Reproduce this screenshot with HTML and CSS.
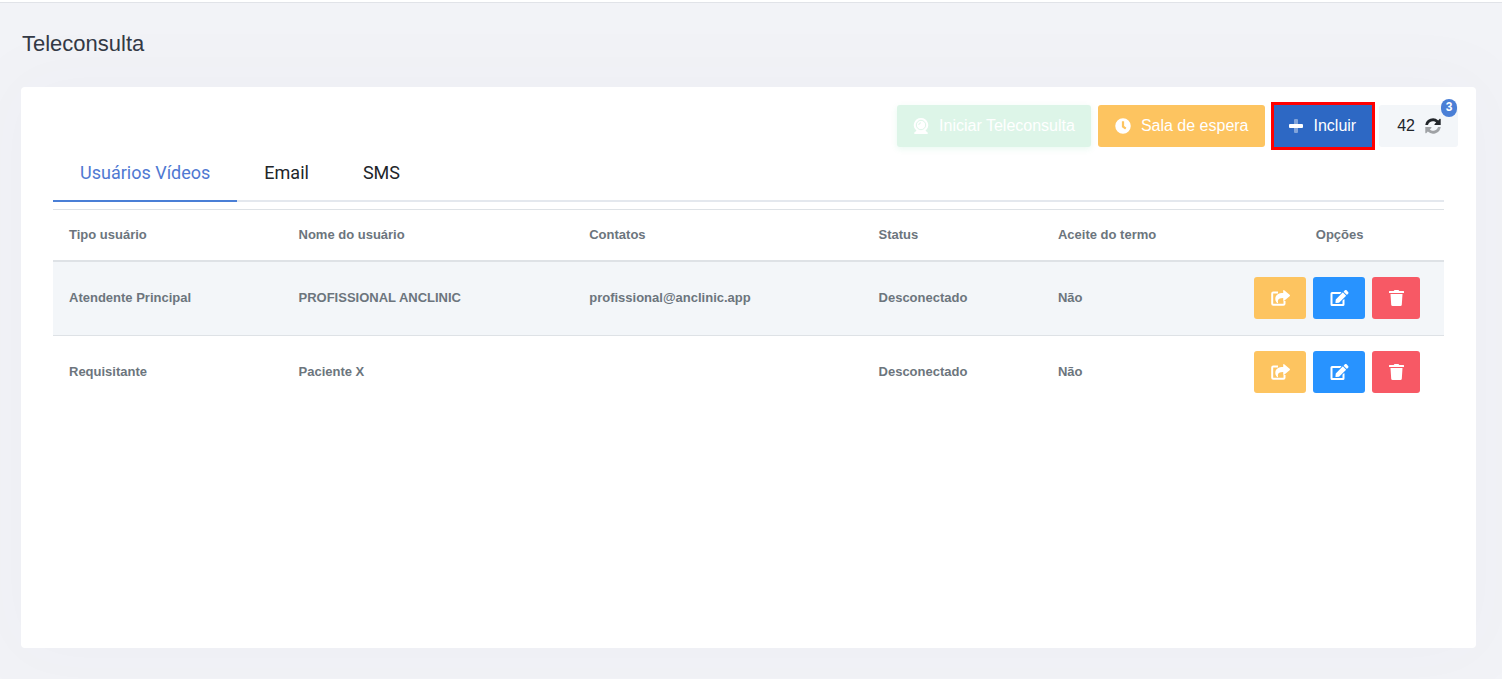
FILE: index.html
```
<!DOCTYPE html>
<html lang="pt-BR">
<head>
<meta charset="utf-8">
<title>Teleconsulta</title>
<link rel="stylesheet" href="styles.css">
</head>
<body>
<svg class="sprite" aria-hidden="true">
  <symbol id="i-share" viewBox="0 0 19 16"><path d="M7 2.500H2.200a1 1 0 0 0-1 1v10.300a1 1 0 0 0 1 1h10.300a1 1 0 0 0 1-1V11" fill="none" stroke="currentColor" stroke-width="2"/><path d="M18.600 4.700 13.200.2c-.4-.4-1-.1-1 .5v2.200C7.500 3 4.300 4.500 4.300 9c0 1.700.8 3.200 2 4.200.4.300.9 0 .8-.5C6.200 9.300 8 8.200 12.200 8v2.300c0 .6.600.9 1 .5l5.400-4.600c.5-.4.5-1.100 0-1.500z"/></symbol>
  <symbol id="i-edit" viewBox="0 0 576 512"><path d="m402 83 91 91c4 4 4 10 0 14L273 408l-94 10c-12 2-23-9-21-21l10-94L388 83c4-4 10-4 14 0zm162-23-49-49c-15-15-40-15-55 0l-35 35c-4 4-4 10 0 14l91 91c4 4 10 4 14 0l34-35c16-16 16-41 0-56zM384 346V448H64V128h230c3 0 6-1 8-4l40-40c8-7 3-20-8-20H48a48 48 0 0 0-48 48v352a48 48 0 0 0 48 48h352a48 48 0 0 0 48-48V306c0-11-13-16-20-9l-40 40c-3 3-4 6-4 9z"/></symbol>
  <symbol id="i-trash" viewBox="0 0 16 16"><path d="M6 0h4l.8 1H15a.5.5 0 0 1 .5.500V3H.500V1.500A.5.5 0 0 1 1 1h4.200zM2 4h12l-.7 10.700a1.400 1.400 0 0 1-1.400 1.300H4.100a1.400 1.400 0 0 1-1.400-1.300z"/></symbol>
  <symbol id="i-clock" viewBox="0 0 512 512"><path d="M256 8a248 248 0 1 0 0 496 248 248 0 0 0 0-496zm57 350-88-64c-3-2-5-6-5-10V116c0-7 5-12 12-12h48c7 0 12 5 12 12v138l65 47c5 4 6 12 2 17l-28 38c-4 5-12 6-18 2z"/></symbol>
  <symbol id="i-cam" viewBox="0 0 16 16"><path d="M8 0a7.200 7.200 0 0 1 4.500 12.800l2.200 1.700V16H1.300v-1.500l2.200-1.700A7.200 7.200 0 0 1 8 0z"/><circle class="lens" cx="8" cy="7" r="4.700"/><path class="lens" d="M5.800 7A2.200 2.200 0 0 1 8 4.800"/></symbol>
  <symbol id="i-plus" viewBox="0 0 16 16"><rect x="6" y="1" width="4" height="14" rx="1" opacity=".4"/><rect x="1" y="6" width="14" height="4" rx="1"/></symbol>
  <symbol id="i-sync" viewBox="0 0 16 16"><path d="M.3 7A7.700 7.700 0 0 1 13.200 2.400L14.800.8c.3-.3.900-.1.900.4V7H10c-.5 0-.7-.6-.4-.9l1.600-1.600A5 5 0 0 0 3 7z"/><path opacity=".4" d="M15.700 9A7.700 7.700 0 0 1 2.800 13.600l-1.600 1.600c-.3.300-.9.100-.9-.4V9H6c.5 0 .7.600.4.900l-1.600 1.600A5 5 0 0 0 13 9z"/></symbol>
</svg>
<div class="topbar"></div>
<main class="page">
  <h1 class="title">Teleconsulta</h1>
  <section class="card">
    <div class="toolbar">
      <button class="btn start" type="button" disabled><svg class="icon"><use href="#i-cam"/></svg>Iniciar Teleconsulta</button>
      <button class="btn waiting" type="button"><svg class="icon"><use href="#i-clock"/></svg>Sala de espera</button>
      <button class="btn include" type="button"><svg class="icon"><use href="#i-plus"/></svg>Incluir</button>
      <button class="btn refresh" type="button">42<svg class="icon"><use href="#i-sync"/></svg><span class="badge">3</span></button>
    </div>
    <div class="content">
      <nav class="tabs">
        <a class="tab active" href="#videos">Usuários Vídeos</a>
        <a class="tab" href="#email">Email</a>
        <a class="tab" href="#sms">SMS</a>
      </nav>
      <table class="users" id="videos">
        <colgroup><col class="c-type"><col class="c-name"><col class="c-contact"><col class="c-status"><col class="c-terms"><col class="c-options"></colgroup>
        <thead>
          <tr><th>Tipo usuário</th><th>Nome do usuário</th><th>Contatos</th><th>Status</th><th>Aceite do termo</th><th class="center">Opções</th></tr>
        </thead>
        <tbody>
          <tr>
            <td>Atendente Principal</td><td>PROFISSIONAL ANCLINIC</td><td>profissional@anclinic.app</td><td>Desconectado</td><td>Não</td>
            <td class="options"><div class="actions">
              <button class="act share" type="button" aria-label="Compartilhar"><svg class="glyph"><use href="#i-share"/></svg></button>
              <button class="act edit" type="button" aria-label="Editar"><svg class="glyph"><use href="#i-edit"/></svg></button>
              <button class="act remove" type="button" aria-label="Excluir"><svg class="glyph"><use href="#i-trash"/></svg></button>
            </div></td>
          </tr>
          <tr>
            <td>Requisitante</td><td>Paciente X</td><td></td><td>Desconectado</td><td>Não</td>
            <td class="options"><div class="actions">
              <button class="act share" type="button" aria-label="Compartilhar"><svg class="glyph"><use href="#i-share"/></svg></button>
              <button class="act edit" type="button" aria-label="Editar"><svg class="glyph"><use href="#i-edit"/></svg></button>
              <button class="act remove" type="button" aria-label="Excluir"><svg class="glyph"><use href="#i-trash"/></svg></button>
            </div></td>
          </tr>
        </tbody>
      </table>
    </div>
  </section>
</main>
</body>
</html>
```

FILE: styles.css
```
* { box-sizing: border-box; }
body {
  margin: 0;
  min-height: 100vh;
  display: flex;
  flex-direction: column;
  background: #f2f3f7;
  color: #212529;
  font-family: "Liberation Sans", Arial, sans-serif;
}
.sprite { display: none; }
.topbar { height: 3px; background: #fff; border-bottom: 1px solid #e1e3e8; }
.page {
  flex: 1;
  display: flex;
  flex-direction: column;
  padding: 27px 26px 31px 21px;
}
.title { margin: 0 0 29px; padding-left: 1px; font-size: 22px; line-height: 28px; font-weight: 400; color: #343a46; }
.card {
  flex: 1;
  padding: 18px 18px 32px 32px;
  background: #fff;
  border-radius: 4px;
  box-shadow: 0 0 80px 20px rgba(60, 60, 110, .02);
}
.toolbar { display: flex; justify-content: flex-end; gap: 7px; }
.btn {
  position: relative;
  display: flex;
  align-items: center;
  gap: 10px;
  height: 42px;
  padding: 0 16px;
  border: 0;
  border-radius: 3px;
  font: 16px/24px "Liberation Sans", Arial, sans-serif;
  color: #fff;
}
.icon { width: 16px; height: 16px; fill: currentColor; }
.lens { fill: none; stroke: #ddf5e8; stroke-width: 1px; }
.start { background: #ddf5e8; box-shadow: 0 2px 6px rgba(40, 200, 120, .1); }
.waiting { padding-left: 17px; background: #fdc460; }
.include { margin-left: 2px; padding-left: 14px; border-radius: 0; background: #2d68c4; outline: 3px solid #f00; }
.refresh { padding: 0 17px 0 18px; background: #f3f6f9; color: #212529; }
.badge {
  position: absolute;
  top: -6px;
  right: 1px;
  width: 16px;
  height: 18px;
  border-radius: 9px;
  background: #4a7fd6;
  color: #fff;
  font-size: 12px;
  line-height: 17px;
  font-weight: 700;
}
.content { margin-right: 14px; }
.tabs { display: flex; border-bottom: 2px solid #e4e8ee; margin-bottom: 7px; }
.tab {
  padding: 13px 27px 14px;
  margin-bottom: -2px;
  border-bottom: 2px solid transparent;
  font: 18px/26px Roboto, sans-serif;
  color: #212529;
  text-decoration: none;
}
.tab.active { color: #4f79d2; border-color: #4a7fd6; }
.users {
  width: 100%;
  table-layout: fixed;
  border-spacing: 0;
  font-size: 13px;
  line-height: 19px;
  font-weight: 700;
  color: #6c757d;
}
.c-type { width: 16.5%; }
.c-name { width: 20.9%; }
.c-contact { width: 20.8%; }
.c-status { width: 12.9%; }
.c-terms { width: 13.9%; }
.users th { padding: 15px 16px 16px; text-align: left; border-top: 1px solid #dee2e6; border-bottom: 2px solid #dee2e6; }
.users th.center { text-align: center; }
.users td { height: 73px; padding: 15px 16px 18px; vertical-align: middle; }
.users tbody tr:first-child td { height: 74px; background: #f3f6f9; border-bottom: 1px solid #dee2e6; }
.users td.options { padding: 15px 15px 16px 19px; }
.actions { display: flex; gap: 7px; }
.act {
  display: flex;
  align-items: center;
  justify-content: center;
  width: 52px;
  height: 42px;
  padding: 0;
  border: 0;
  border-radius: 3px;
  color: #fff;
}
.act.remove { width: 48px; }
.share { background: #fdc460; }
.edit { background: #2893ff; }
.remove { background: #f75965; }
.glyph { width: 19px; height: 16px; fill: currentColor; }
```
